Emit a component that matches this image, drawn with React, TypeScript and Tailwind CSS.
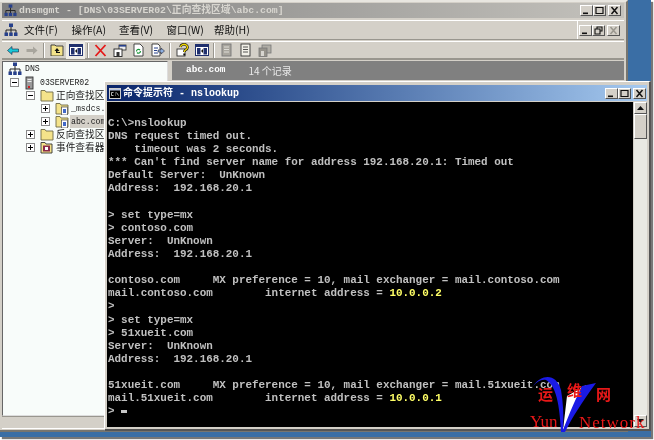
import React from "react";

const mono = "font-['Liberation_Mono','Noto_Sans_CJK_SC',monospace]";
const cjk = "font-['Noto_Sans_CJK_SC','Liberation_Sans',sans-serif]";

function WinBtn({ kind, disabled }: { kind: "min" | "max" | "close" | "restore"; disabled?: boolean }) {
  const c = disabled ? "#9a978f" : "#111";
  return (
    <div className="w-[13px] h-[11px] bg-[#d4d0c8] border border-t-white border-l-white border-r-[#555] border-b-[#555] flex items-center justify-center">
      <svg width="11" height="9" viewBox="0 0 11 9">
        {kind === "min" && <rect x="2" y="6.5" width="5" height="1.6" fill={c} />}
        {kind === "max" && <path d="M2 1.5h7v6H2zM2 1.5h7" fill="none" stroke={c} strokeWidth="1.2" />}
        {kind === "close" && <path d="M2.5 1l6 7M8.5 1l-6 7" stroke={c} strokeWidth="1.5" />}
        {kind === "restore" && <path d="M4 2.5V1h5v4H7.5M2 3h5v5H2z" fill="none" stroke={c} strokeWidth="1.1" />}
      </svg>
    </div>
  );
}

function NetIcon({ size = 14 }: { size?: number }) {
  return (
    <svg width={size} height={size} viewBox="0 0 14 14">
      <rect x="5" y="0.5" width="4" height="3.5" fill="#27408b" />
      <path d="M7 4v3M2 7h10M2 7v3M12 7v3M7 7v3" stroke="#222" strokeWidth="1" fill="none" />
      <rect x="0.5" y="9.5" width="3.5" height="3.5" fill="#27408b" />
      <rect x="5.2" y="9.5" width="3.5" height="3.5" fill="#27408b" />
      <rect x="10" y="9.5" width="3.5" height="3.5" fill="#27408b" />
    </svg>
  );
}

function Folder({ doc }: { doc?: boolean }) {
  return (
    <svg width="14" height="13" viewBox="0 0 14 13">
      <path d="M1 3V1.5h4L6 3h7v9H1z" fill="#f4e38a" stroke="#6e6a45" strokeWidth="0.9" />
      {doc && (
        <>
          <rect x="6.5" y="5" width="6" height="8" fill="#fff" stroke="#555" strokeWidth="0.8" />
          <rect x="8" y="7" width="3" height="4" fill="#4169c8" />
        </>
      )}
    </svg>
  );
}

function Expander({ plus }: { plus?: boolean }) {
  return (
    <div className="w-[9px] h-[9px] bg-white border border-[#8a8a8a] flex items-center justify-center relative">
      <div className="w-[5px] h-px bg-black" />
      {plus && <div className="absolute w-px h-[5px] bg-black" />}
    </div>
  );
}

function TreeRow({ indent, exp, icon, label, selected, latin }: { indent: string; exp?: React.ReactNode; icon: React.ReactNode; label: string; selected?: boolean; latin?: boolean }) {
  return (
    <div className={`h-[13px] flex items-center whitespace-nowrap ${indent}`}>
      <div className="w-[14px] shrink-0 flex">{exp}</div>
      <div className="w-[15px] shrink-0 flex">{icon}</div>
      <span className={`px-px leading-[13px] text-[#222] ${latin ? `${mono} text-[8.2px]` : `${cjk} text-[9.7px]`} ${selected ? "bg-[#d4d0c8]" : ""}`}>{label}</span>
    </div>
  );
}

function Sep() {
  return <div className="w-[2px] h-[15px] border-l border-l-[#99968e] border-r border-r-white mx-[2px]" />;
}

function Tool({ children, pressed }: { children: React.ReactNode; pressed?: boolean }) {
  return <div className={`w-[19px] h-[18px] flex items-center justify-center ${pressed ? "bg-[#eeece6]" : ""}`}>{children}</div>;
}

function Doc({ gray }: { gray?: boolean }) {
  return (
    <svg width="13" height="14" viewBox="0 0 13 14">
      <rect x="2" y="1" width="9" height="12" fill={gray ? "#a9a69e" : "#f2f0e8"} stroke={gray ? "#777" : "#333"} strokeWidth="0.9" />
      <path d="M4 4h5M4 6.5h5M4 9h5" stroke={gray ? "#e4e2dc" : "#444"} strokeWidth="0.9" />
    </svg>
  );
}

const IconPane = () => (
  <svg width="14" height="12" viewBox="0 0 14 12">
    <rect x="0.5" y="0.5" width="13" height="11" fill="#fff" stroke="#20306e" />
    <rect x="0.5" y="0.5" width="13" height="2.5" fill="#20306e" />
    <rect x="2" y="4" width="3.5" height="6.5" fill="#20306e" />
    <rect x="8.5" y="4" width="3.5" height="6.5" fill="#20306e" />
    <path d="M6 7l2-2v4z" fill="#111" />
  </svg>
);

const lines: React.ReactNode[] = [
  "",
  "C:\\>nslookup",
  "DNS request timed out.",
  "    timeout was 2 seconds.",
  "*** Can't find server name for address 192.168.20.1: Timed out",
  "Default Server:  UnKnown",
  "Address:  192.168.20.1",
  "",
  "> set type=mx",
  "> contoso.com",
  "Server:  UnKnown",
  "Address:  192.168.20.1",
  "",
  "contoso.com     MX preference = 10, mail exchanger = mail.contoso.com",
  <>mail.contoso.com        internet address = <span className="text-[#ffff66]">10.0.0.2</span></>,
  ">",
  "> set type=mx",
  "> 51xueit.com",
  "Server:  UnKnown",
  "Address:  192.168.20.1",
  "",
  "51xueit.com     MX preference = 10, mail exchanger = mail.51xueit.com",
  <>mail.51xueit.com        internet address = <span className="text-[#ffff66]">10.0.0.1</span></>,
  <>{"> "}<span className="inline-block w-[6px] h-[3px] bg-[#c8c8c8] align-[1px]" /></>,
];

const menus = ["文件(F)", "操作(A)", "查看(V)", "窗口(W)", "帮助(H)"];

export default function App() {
  return (
    <div className="w-[654px] h-[440px] bg-white overflow-hidden blur-[0.4px]">
      <div className="relative w-[651px] h-[437px] bg-[#3a6ea5] shadow-[2px_2px_1px_#777] overflow-hidden">
        {/* MMC window */}
        <div className="absolute left-0 top-0 w-[628px] h-[432px] bg-[#d4d0c8] border-r-2 border-b-2 border-r-[#77756f] border-b-[#77756f] border-t-2 border-t-[#e8e6e0] flex flex-col">
          <div className="h-[15px] mx-[2px] mt-px px-[2px] bg-gradient-to-r from-[#7f7f7f] to-[#c4c2bc] flex items-center justify-between">
            <div className="flex items-center gap-[2px]">
              <NetIcon size={13} />
              <span className={`${mono} text-[9.8px] font-bold text-[#d8d6d0] whitespace-pre leading-[14px]`}>dnsmgmt - [DNS\03SERVER02\正向查找区域\abc.com]</span>
            </div>
            <div className="flex pr-[1px]">
              <WinBtn kind="min" />
              <WinBtn kind="max" />
              <div className="w-[2px]" />
              <WinBtn kind="close" />
            </div>
          </div>
          <div className="h-[20px] mt-[2px] mx-[2px] flex items-center border-t border-t-white border-b border-b-[#99968e]">
            <div className="pl-[2px] w-[22px]">
              <NetIcon />
            </div>
            <div className={`${cjk} flex-1 flex text-[10.5px] text-[#111]`}>
              {menus.map((m) => (
                <span key={m} className="w-[47.5px]">{m}</span>
              ))}
            </div>
            <div className="flex items-center pr-[4px] border-l border-l-[#fff] h-full pl-[1px]">
              <WinBtn kind="min" />
              <WinBtn kind="restore" />
              <div className="w-[2px]" />
              <WinBtn kind="close" disabled />
            </div>
          </div>
          <div className="h-[19px] mx-[2px] mt-px flex items-center border-b-2 border-b-[#99968e] pl-[1px] border-t border-t-white">
            <Tool>
              <svg width="12" height="9" viewBox="0 0 12 9"><path d="M0.5 4.5L5 0.5v2.5h6.5v3H5v2.5z" fill="#19c8d8" stroke="#124" strokeWidth="0.6" /></svg>
            </Tool>
            <Tool>
              <svg width="12" height="9" viewBox="0 0 12 9"><path d="M11.5 4.5L7 0.5v2.5H0.5v3H7v2.5z" fill="#a8a59d" /></svg>
            </Tool>
            <Sep />
            <Tool>
              <svg width="14" height="12" viewBox="0 0 14 12"><path d="M1 2V1h4l1 1h7v10H1z" fill="#f4e38a" stroke="#333" strokeWidth="0.9" /><path d="M7 4L4.5 7H6v2h4V8H7.5V7H9.5z" fill="#111" /></svg>
            </Tool>
            <Tool pressed>
              <IconPane />
            </Tool>
            <Sep />
            <Tool>
              <svg width="13" height="13" viewBox="0 0 13 13"><path d="M1.5 1l10 11M11.5 1l-10 11" stroke="#e51a1a" strokeWidth="1.8" /></svg>
            </Tool>
            <Tool>
              <svg width="14" height="13" viewBox="0 0 14 13"><rect x="6" y="1" width="7" height="5" fill="#eee" stroke="#222" strokeWidth="0.8" /><rect x="1" y="5" width="8" height="7.5" fill="#fff" stroke="#222" strokeWidth="0.9" /><rect x="3.5" y="8" width="3" height="4.5" fill="#333" /><rect x="6" y="1" width="7" height="1.6" fill="#27408b" /></svg>
            </Tool>
            <Tool>
              <svg width="13" height="14" viewBox="0 0 13 14"><path d="M2 1h6l3 3v9H2z" fill="#fff" stroke="#333" strokeWidth="0.9" /><path d="M4.5 8.5a2 2 0 0 1 3.5-1.5M8.5 8a2 2 0 0 1-3.5 1.5" stroke="#1c9a3c" strokeWidth="1.2" fill="none" /></svg>
            </Tool>
            <Tool>
              <svg width="14" height="14" viewBox="0 0 14 14"><path d="M1 1h6l2 2v10H1z" fill="#fff" stroke="#333" strokeWidth="0.9" /><path d="M3 5h4M3 7.5h3M3 10h4" stroke="#27408b" /><path d="M7 7h3V5l3.5 3-3.5 3V9H7z" fill="#8fb0e0" stroke="#223" strokeWidth="0.6" /></svg>
            </Tool>
            <Sep />
            <Tool>
              <svg width="14" height="14" viewBox="0 0 14 14"><rect x="1" y="6" width="8" height="7" fill="#fff" stroke="#333" strokeWidth="0.9" /><path d="M4.5 4a3.5 3 0 1 1 5 3c-1 .6-1.2 1-1.2 2" fill="none" stroke="#111" strokeWidth="2.6" /><path d="M4.5 4a3.5 3 0 1 1 5 3c-1 .6-1.2 1-1.2 2" fill="none" stroke="#f1d800" strokeWidth="1.4" /><rect x="7.3" y="10.5" width="2" height="2" fill="#111" /></svg>
            </Tool>
            <Tool>
              <IconPane />
            </Tool>
            <Sep />
            <Tool><Doc gray /></Tool>
            <Tool><Doc /></Tool>
            <Tool>
              <svg width="14" height="13" viewBox="0 0 14 13"><rect x="4" y="1" width="9" height="8" fill="#b0ada5" stroke="#777" strokeWidth="0.8" /><rect x="1" y="4" width="8" height="8.5" fill="#96938b" stroke="#777" strokeWidth="0.8" /><rect x="3" y="7" width="3" height="5" fill="#d8d6d0" /></svg>
            </Tool>
          </div>
          <div className="flex-1 flex min-h-0 mt-px mx-[2px] gap-[4px]">
            <div className="w-[166px] bg-[#f8fcfa] border border-t-[#666] border-l-[#666] border-r-[#ddd] border-b-[#ddd] pl-[2px] flex flex-col">
              <div className="h-[14px] flex items-center pl-[3px] gap-[3px]">
                <NetIcon />
                <span className={`${mono} text-[8.2px] text-[#222]`}>DNS</span>
              </div>
              <TreeRow
                indent="pl-[5px]"
                exp={<Expander />}
                icon={
                  <svg width="11" height="14" viewBox="0 0 11 14"><rect x="2" y="1" width="7" height="12" fill="#9a9a9a" stroke="#333" strokeWidth="0.9" /><path d="M3.5 3.5h4M3.5 5.5h4" stroke="#eee" /><rect x="4" y="10" width="2" height="2" fill="#c22" /></svg>
                }
                label="03SERVER02"
                latin
              />
              <TreeRow indent="pl-[21px]" exp={<Expander />} icon={<Folder />} label="正向查找区域" />
              <TreeRow indent="pl-[36px]" exp={<Expander plus />} icon={<Folder doc />} label="_msdcs.abc.com" latin />
              <TreeRow indent="pl-[36px]" exp={<Expander plus />} icon={<Folder doc />} label="abc.com" selected latin />
              <TreeRow indent="pl-[21px]" exp={<Expander plus />} icon={<Folder />} label="反向查找区域" />
              <TreeRow
                indent="pl-[21px]"
                exp={<Expander plus />}
                icon={
                  <svg width="13" height="13" viewBox="0 0 13 13"><path d="M1 3V1.5h4L6 3h6v9H1z" fill="#f4e38a" stroke="#333" strokeWidth="0.9" /><rect x="3" y="4.5" width="7" height="6" fill="#8a2a4a" /><rect x="5" y="6" width="3" height="3" fill="#fff" /></svg>
                }
                label="事件查看器"
              />
            </div>
            <div className="flex-1 h-[19px] bg-[#808080] flex items-center pl-[14px] text-white whitespace-pre">
              <span className={`${mono} text-[9.4px] font-bold`}>abc.com</span>
              <span className={`${cjk} text-[10px] ml-[23px] text-[#e8e8e8]`}>14 个记录</span>
            </div>
          </div>
          <div className="h-[13px] mx-[2px] mb-[1px] border-t border-t-[#99968e] border-b border-b-white" />
        </div>

        {/* Command prompt */}
        <div className="absolute left-[104px] top-[81px] w-[547px] h-[350px] bg-[#d4d0c8] border-t border-l border-t-white border-l-white border-r-2 border-b-2 border-r-[#555] border-b-[#555] p-[2px] flex flex-col">
          <div className="h-[16px] mt-px shrink-0 bg-gradient-to-r from-[#0a246a] to-[#a6caf0] flex items-center justify-between pl-[2px] pr-[1px]">
            <div className="flex items-center gap-[2px]">
              <svg width="12" height="11" viewBox="0 0 12 11">
                <rect x="0.5" y="0.5" width="11" height="10" fill="#000" stroke="#ccc" />
                <rect x="1" y="1" width="10" height="1.5" fill="#b8c4e0" />
                <path d="M2.5 4.5h2M2.5 4.5v3h2M6 5h.8M6 7h.8M7.5 4.5l2 3" stroke="#ddd" strokeWidth="0.8" fill="none" />
              </svg>
              <span className={`${mono} text-[10px] font-bold text-white whitespace-pre`}>命令提示符 - nslookup</span>
            </div>
            <div className="flex">
              <WinBtn kind="min" />
              <WinBtn kind="max" />
              <div className="w-[2px]" />
              <WinBtn kind="close" />
            </div>
          </div>
          <div className="flex-1 flex min-h-0 mt-px">
            <div className={`flex-1 bg-black pl-[1px] pt-[1.5px] ${mono} text-[10.92px] font-bold text-[#c0c0c0] leading-[13.13px] whitespace-pre overflow-hidden`}>
              {lines.map((l, i) => (
                <div key={i} className="h-[13.13px]">
                  {l}
                </div>
              ))}
            </div>
            <div className="w-[13px] ml-px bg-[#e9e9e3] flex flex-col justify-between">
              <div className="flex flex-col">
                <div className="h-[12px] bg-[#d4d0c8] border border-t-white border-l-white border-r-[#555] border-b-[#555] flex items-center justify-center">
                  <svg width="7" height="4" viewBox="0 0 7 4"><path d="M3.5 0L7 4H0z" fill="#111" /></svg>
                </div>
                <div className="h-[25px] bg-[#d4d0c8] border border-t-white border-l-white border-r-[#555] border-b-[#555]" />
              </div>
              <div className="h-[12px] bg-[#d4d0c8] border border-t-white border-l-white border-r-[#555] border-b-[#555] flex items-center justify-center">
                <svg width="7" height="4" viewBox="0 0 7 4"><path d="M3.5 4L7 0H0z" fill="#111" /></svg>
              </div>
            </div>
          </div>
        </div>

        {/* Watermark */}
        <svg className="absolute left-[530px] top-[372px]" width="70" height="62" viewBox="0 0 70 62">
          <path d="M33 58L37 24 Q48 18 56 13 Z" fill="#fff" />
          <path d="M3 14C12 2 26 1 31 18C33 30 34 44 33 58C40 40 46 26 52 14L66 11C52 30 42 46 35 60H31C30 42 28 14 16 8C11 7 7 10 3 14Z" fill="#1a1ae6" />
        </svg>
        <div className={`${cjk} absolute left-[538px] top-[384px] text-[15px] leading-[20px] font-bold text-[#e81818]`}>运</div>
        <div className={`${cjk} absolute left-[567px] top-[380px] text-[15px] leading-[20px] font-bold text-[#e81818]`}>维</div>
        <div className={`${cjk} absolute left-[596px] top-[384px] text-[15px] leading-[20px] font-bold text-[#e81818]`}>网</div>
        <div className="absolute left-[530px] top-[412px] font-['Liberation_Serif',serif] text-[17px] leading-[20px] text-[#e81818]">Yun</div>
        <div className="absolute left-[579px] top-[413px] font-['Liberation_Serif',serif] text-[17px] leading-[20px] tracking-[1px] text-[#e81818]">Network</div>
      </div>
    </div>
  );
}
